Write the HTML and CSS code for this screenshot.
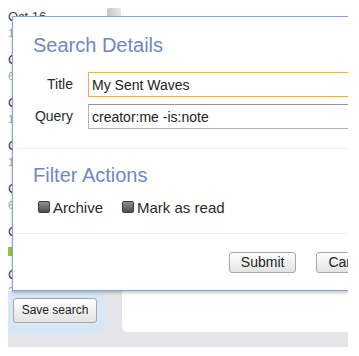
FILE: index.html
```html
<!DOCTYPE html>
<html>
<head>
<meta charset="utf-8">
<link rel="stylesheet" href="styles.css">
</head>
<body>
<div class="app">
  <div class="main">
    <div class="leftcol">
      <div class="listwrap">
        <div class="list">
          <div class="item"><div class="who">Oct 16</div><div class="snip">1 new of 4</div></div>
          <div class="item"><div class="who">Chris Lee</div><div class="snip">6 msgs</div></div>
          <div class="item"><div class="who">Claire Bond</div><div class="snip">1 new of 2</div></div>
          <div class="item"><div class="who">Carl Meyer</div><div class="snip">1 msg</div></div>
          <div class="item"><div class="who">Cora Hill</div><div class="snip">6 msgs</div></div>
          <div class="item"><div class="who">Colin Park</div><div class="green"></div></div>
          <div class="item"><div class="who">Cathy Ross</div><div class="snip">2 msgs</div></div>
        </div>
        <div class="track"><div class="thumb"></div></div>
      </div>
      <div class="footer"><button class="btn save">Save search</button></div>
    </div>
    <div class="rightcol"></div>
  </div>

  <div class="dialog">
    <div class="section">
      <h2 class="heading">Search Details</h2>
      <div class="form">
        <label class="label">Title</label>
        <input class="field focused" type="text" value="My Sent Waves">
        <label class="label">Query</label>
        <input class="field" type="text" value="creator:me -is:note">
      </div>
    </div>
    <div class="sep sep1"></div>
    <div class="section">
      <h2 class="heading heading2">Filter Actions</h2>
      <div class="checks">
        <span class="cb"><span class="box"></span>Archive</span>
        <span class="cb"><span class="box"></span>Mark as read</span>
      </div>
    </div>
    <div class="sep sep2"></div>
    <div class="actions">
      <button class="btn">Submit</button>
      <button class="btn">Cancel</button>
    </div>
  </div>
</div>
</body>
</html>
```

FILE: styles.css
```css
* { box-sizing: border-box; }
html, body { margin: 0; padding: 0; background: #fff; }
body {
  font-family: "Liberation Sans", Arial, sans-serif;
  width: 359px;
  height: 356px;
  overflow: hidden;
}
.app {
  position: relative;
  margin-left: 8px;
  width: 340px;
  height: 347px;
  background: #e4e6e9;
  overflow: hidden;
}
.main { display: flex; height: 333px; }
.leftcol { width: 114px; display: flex; flex-direction: column; }
.listwrap { display: flex; height: 291px; background: #fff; }
.list {
  width: 99px;
  padding-top: 9px;
  font-size: 13px;
  line-height: 16px;
  overflow: hidden;
  white-space: nowrap;
}
.item { height: 43px; }
.who { color: #3d3560; }
.snip { color: #a8a8a8; font-size: 11px; }
.green { width: 30px; height: 9px; background: #99c533; margin-top: 7px; }
.track { width: 15px; padding: 8px 1px 0 0; }
.thumb {
  width: 14px;
  height: 40px;
  border-radius: 2px;
  background: linear-gradient(to right, #c6c6c6, #e8e8e8);
}
.footer {
  width: 97px;
  height: 42px;
  background: #d7e7f7;
  border-bottom-right-radius: 6px;
  padding: 7px 5px;
}
.rightcol {
  flex: 1;
  height: 332px;
  background: #fff;
  border-bottom-left-radius: 6px;
}
.btn {
  font-family: "Liberation Sans", Arial, sans-serif;
  font-size: 14px;
  color: #222;
  height: 21px;
  padding: 0 11px;
  border: 1px solid #a8a8a8;
  border-radius: 3px;
  background: linear-gradient(#ffffff, #e3e3e3);
  line-height: 19px;
}
.save {
  font-size: 12px;
  height: 25px;
  width: 84px;
  padding: 0;
}
.dialog {
  position: absolute;
  left: 4px;
  top: 16px;
  width: 393px;
  height: 275px;
  border: 1px solid #87a3d3;
  background: #fff;
  box-shadow: 0 2px 3px rgba(0, 0, 0, 0.22);
  padding-top: 17px;
}
.section { padding: 0 20px; }
.heading {
  margin: 0;
  font-size: 20px;
  line-height: 23px;
  font-weight: normal;
  color: #7087c2;
}
.heading2 { margin-top: 15px; }
.form {
  margin-top: 15px;
  display: grid;
  grid-template-columns: 40px 300px;
  column-gap: 15px;
  row-gap: 7px;
}
.label {
  font-size: 14px;
  line-height: 25px;
  text-align: right;
  color: #2a2a2a;
}
.field {
  height: 25px;
  border: 1px solid #b4b4b4;
  border-top-color: #949494;
  padding: 0 3px;
  font-family: "Liberation Sans", Arial, sans-serif;
  font-size: 14px;
  color: #222;
  outline: none;
}
.focused {
  border: 1px solid #e2b35a;
  box-shadow: 0 0 1px #f1d69a;
}
.sep { height: 1px; background: #ececec; margin: 0 4px; }
.sep1 { margin-top: 19px; }
.sep2 { margin-top: 17px; }
.checks {
  margin-top: 11px;
  height: 18px;
  padding-left: 5px;
  display: flex;
  align-items: center;
  font-size: 15px;
  color: #2a2a2a;
}
.cb { display: flex; align-items: center; gap: 3px; margin-right: 19px; }
.box {
  width: 12px;
  height: 12px;
  border-radius: 2px;
  border: 1px solid #3c3c3c;
  background: linear-gradient(#909090, #4c4c4c);
}
.actions {
  margin-top: 18px;
  display: flex;
  justify-content: flex-end;
  gap: 20px;
  padding-right: 20px;
}
```
